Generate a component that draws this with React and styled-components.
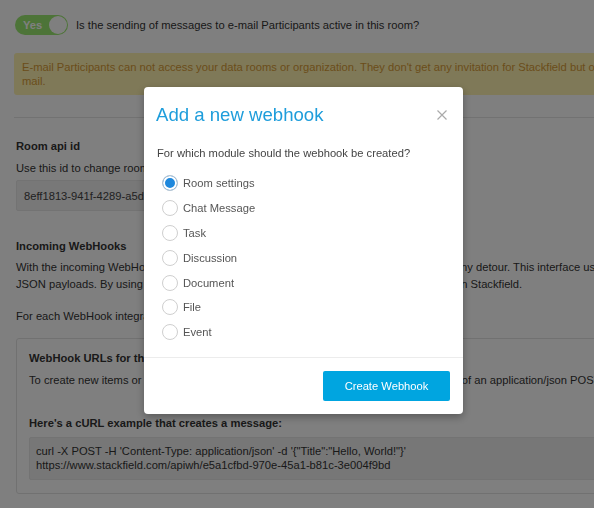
import React from "react";
import styled, { createGlobalStyle } from "styled-components";

const Global = createGlobalStyle`
  html, body { margin: 0; padding: 0; overflow: hidden; background: #fff; }
  body { font-family: "Liberation Sans", Arial, Helvetica, sans-serif; font-size: 11.2px; color: #333; }
  * { box-sizing: border-box; }
`;

const Page = styled.div`
  width: 720px;
  height: 508px;
  padding: 15px 0 0 14px;
  overflow: hidden;
`;

const ToggleRow = styled.div`
  display: flex;
  align-items: center;
  gap: 8px;
  height: 20px;
  padding-left: 1px;
`;

const Switch = styled.div`
  width: 53px;
  height: 20px;
  border-radius: 10px;
  background: #9be870;
  display: flex;
  align-items: center;
  justify-content: space-between;
  padding: 0 1px 0 8px;
  color: #fff;
  font-weight: bold;
  font-size: 11.2px;
`;

const Knob = styled.span`
  width: 18px;
  height: 18px;
  border-radius: 50%;
  background: #fff;
`;

const Warning = styled.div`
  margin-top: 18px;
  padding: 7px 8px;
  line-height: 14px;
  background: #fff2b0;
  color: #d69b36;
  border-radius: 3px;
  white-space: nowrap;
`;

const Divider = styled.hr`
  margin: 22px 0 0;
  border: 0;
  border-top: 1px solid #e4e4e4;
`;

const Section = styled.section`
  padding-left: 2px;
  margin-top: ${(p) => p.$top || 0}px;
`;

const Heading = styled.h4`
  margin: ${(p) => p.$top || 0}px 0 0;
  font-size: 11.2px;
  line-height: 14px;
  font-weight: bold;
  color: #333;
`;

const Text = styled.p`
  margin: ${(p) => p.$top || 0}px 0 0;
  line-height: ${(p) => p.$lh || 17}px;
  white-space: nowrap;
`;

const IdField = styled.div`
  margin-top: 3px;
  width: 380px;
  height: 31px;
  padding: 0 7px;
  display: flex;
  align-items: center;
  background: #f0f0f0;
  border: 1px solid #e6e6e6;
  border-radius: 2px;
  color: #444;
`;

const Panel = styled.div`
  margin-top: 13px;
  border: 1px solid #e2e2e2;
  border-radius: 3px;
  padding: 12px 12px 13px;
`;

const Code = styled.div`
  margin-top: 7px;
  background: #eeeeee;
  border: 1px solid #e6e6e6;
  border-radius: 2px;
  padding: 7px 6px;
  line-height: 13.5px;
  color: #333;
  white-space: nowrap;
`;

const Overlay = styled.div`
  position: fixed;
  inset: 0;
  background: rgba(0, 0, 0, 0.5);
`;

const Modal = styled.div`
  margin: 87px 0 0 144px;
  width: 319px;
  background: #fff;
  border-radius: 4px;
  box-shadow: 0 3px 9px rgba(0, 0, 0, 0.3);
  overflow: hidden;
`;

const ModalHeader = styled.div`
  display: flex;
  align-items: center;
  justify-content: space-between;
  padding: 16px 15px 0 12px;
  height: 40px;
`;

const Title = styled.h3`
  margin: 0;
  font-size: 18.6px;
  line-height: 24px;
  font-weight: normal;
  color: #1e9ddb;
`;

const Close = styled.button`
  border: 0;
  background: none;
  padding: 0;
  width: 12px;
  height: 12px;
  display: flex;
  cursor: pointer;
`;

const ModalBody = styled.div`
  padding: 19px 13px 12px;
  color: #444;
`;

const Question = styled.p`
  margin: 0;
  line-height: 14px;
  color: #444;
`;

const RadioList = styled.div`
  margin-top: 11px;
  margin-left: 5px;
  display: flex;
  flex-direction: column;
`;

const RadioRow = styled.label`
  display: flex;
  align-items: center;
  gap: 5px;
  height: 24.8px;
  color: #555;
  cursor: pointer;
`;

const RadioDot = styled.span`
  width: 16px;
  height: 16px;
  border-radius: 50%;
  border: 1px solid ${(p) => (p.$on ? "#b9c6d2" : "#cfcfcf")};
  background: ${(p) => (p.$on ? "#1e88dd" : "#fff")};
  box-shadow: ${(p) => (p.$on ? "inset 0 0 0 2px #fff" : "none")};
  flex: none;
`;

const ModalFooter = styled.div`
  border-top: 1px solid #ececec;
  padding: 13px 13px 13px;
  display: flex;
  justify-content: flex-end;
`;

const Button = styled.button`
  width: 127px;
  height: 30px;
  border: 0;
  border-radius: 2px;
  background: #00a5e0;
  color: #fff;
  font-family: inherit;
  font-size: 11.2px;
  cursor: pointer;
`;

const options = ["Room settings", "Chat Message", "Task", "Discussion", "Document", "File", "Event"];

export default function App() {
  return (
    <>
      <Global />
      <Page>
        <ToggleRow>
          <Switch>
            Yes
            <Knob />
          </Switch>
          <span>Is the sending of messages to e-mail Participants active in this room?</span>
        </ToggleRow>
        <Warning>
          E-mail Participants can not access your data rooms or organization. They don't get any invitation for Stackfield but only receive an e-
          <br />
          mail.
        </Warning>
        <Divider />
        <Section $top={21}>
          <Heading>Room api id</Heading>
          <Text $top={7}>Use this id to change room settings via the API.</Text>
          <IdField>8eff1813-941f-4289-a5d2-7c04e1b9f0aa</IdField>
        </Section>
        <Section $top={28}>
          <Heading>Incoming WebHooks</Heading>
          <Text $top={6}>
            With the incoming WebHooks you can send data from outside apps to Stackfield without any detour. This interface uses
            <br />
            JSON payloads. By using the WebHook URL you can add new items and new messages in Stackfield.
          </Text>
          <Text $top={15}>For each WebHook integration a separate URL is available.</Text>
          <Panel>
            <Heading>WebHook URLs for this room</Heading>
            <Text $top={7}>
              To create new items or messages, post the data to one of the URLs below in a payload of an application/json POST request.
            </Text>
            <Heading $top={27}>Here's a cURL example that creates a message:</Heading>
            <Code>
              curl -X POST -H 'Content-Type: application/json' -d '{"{"}"Title":"Hello, World!"{"}"}'
              <br />
              https://www.stackfield.com/apiwh/e5a1cfbd-970e-45a1-b81c-3e004f9bd
            </Code>
          </Panel>
        </Section>
      </Page>
      <Overlay>
        <Modal>
          <ModalHeader>
            <Title>Add a new webhook</Title>
            <Close aria-label="Close">
              <svg width="12" height="12" viewBox="0 0 12 12">
                <path d="M1.5 1.5 L10.5 10.5 M10.5 1.5 L1.5 10.5" stroke="#aaaaaa" strokeWidth="1.2" fill="none" />
              </svg>
            </Close>
          </ModalHeader>
          <ModalBody>
            <Question>For which module should the webhook be created?</Question>
            <RadioList>
              {options.map((o, i) => (
                <RadioRow key={o}>
                  <RadioDot $on={i === 0} />
                  {o}
                </RadioRow>
              ))}
            </RadioList>
          </ModalBody>
          <ModalFooter>
            <Button>Create Webhook</Button>
          </ModalFooter>
        </Modal>
      </Overlay>
    </>
  );
}
